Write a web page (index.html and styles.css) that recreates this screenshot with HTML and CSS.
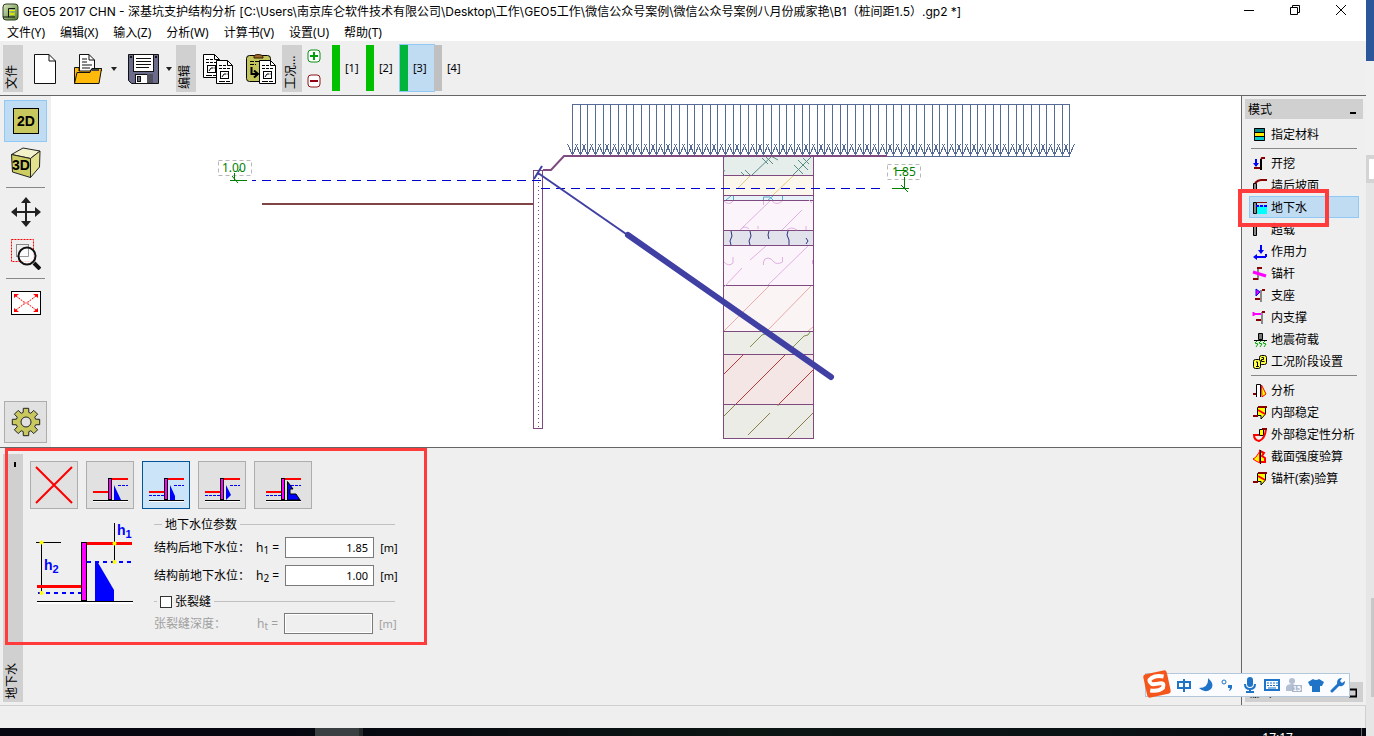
FILE: index.html
```html
<!DOCTYPE html>
<html lang="zh-CN">
<head>
<meta charset="utf-8">
<title>GEO5 2017 CHN - 深基坑支护结构分析</title>
<link rel="stylesheet" href="styles.css">
</head>
<body>
<div class="screen">
<div class="window">
  <header class="titlebar">
    <svg class="app-icon" width="18" height="18" viewBox="0 0 18 18"><defs><linearGradient id="ag" x1="0" y1="0" x2="1" y2="1"><stop offset="0" stop-color="#dce8c0"/><stop offset="1" stop-color="#4e7a2c"/></linearGradient></defs><rect x="1" y="1" width="15" height="16" rx="3" fill="url(#ag)" stroke="#2c3c20" stroke-width="1"/><path d="M1 14H6.500V5.500H13M6 14h7" stroke="#111" fill="none" stroke-width="1"/><path d="M7 7.500h6M7 10q4 1 6 0M7 12q3-1 6 0" stroke="#e6f000" stroke-width="1" fill="none"/></svg>
    <h1 class="title">GEO5 2017 CHN - 深基坑支护结构分析 [C:\Users\南京库仑软件技术有限公司\Desktop\工作\GEO5工作\微信公众号案例\微信公众号案例八月份戚家艳\B1（桩间距1.5）.gp2 *]</h1>
    <div class="controls">
      <button class="control" aria-label="最小化"><svg width="12" height="12" viewBox="0 0 12 12"><path d="M1 6.500H11" stroke="#000"/></svg></button>
      <button class="control" aria-label="还原"><svg width="12" height="12" viewBox="0 0 12 12"><path d="M1.500 3.500H8.500V10.500H1.500ZM3.500 3.500V1.500H10.500V8.500H8.500" stroke="#000" fill="none"/></svg></button>
      <button class="control" aria-label="关闭"><svg width="12" height="12" viewBox="0 0 12 12"><path d="M1 1L11 11M11 1L1 11" stroke="#000"/></svg></button>
    </div>
  </header>
  <nav class="menubar">
    <button>文件(Y)</button><button>编辑(X)</button><button>输入(Z)</button><button>分析(W)</button><button>计算书(V)</button><button>设置(U)</button><button>帮助(T)</button>
  </nav>

  <div class="toolbar">
    <div class="grip">文件</div>
    <div class="tool-group files">
      <button aria-label="新建"><svg width="24" height="32" viewBox="0 0 24 32"><path d="M1.500 1.500H16L22.500 8V30.500H1.500Z" fill="#fff" stroke="#111" stroke-width="1"/><path d="M16 1.500V8H22.500" fill="none" stroke="#111"/></svg></button>
      <button class="open" aria-label="打开"><svg width="30" height="32" viewBox="0 0 30 32"><path d="M6.500 20V1.500H16L21.500 7V18" fill="#fff" stroke="#111"/><path d="M16 1.500V7H21.500M9 6h5M9 9h5M9 12h10M9 15h8" fill="none" stroke="#111"/><path d="M1.500 30.500V14.500H6V18H17L19 15.500H28.500V18" fill="#ffb90a" stroke="#111"/><path d="M1.500 30.500L4 19.500H17L19 15.500H28.500L26 30.500Z" fill="#ffb90a" stroke="#111"/><path d="M19 17H26" stroke="#444" stroke-width="2"/></svg></button>
      <button class="caret" aria-label="打开选项"></button>
      <button aria-label="保存"><svg width="31" height="32" viewBox="0 0 31 32"><path d="M.5 1.500H30.500V30.500H3.500L.5 27.500Z" fill="#6b6b8c" stroke="#111"/><rect x="5.500" y="1.500" width="20" height="17" fill="#fff" stroke="#111"/><path d="M8 5.500h15M8 8.500h15M8 11.500h15M8 14.500h13" stroke="#111"/><rect x="7.500" y="21.500" width="17" height="9" fill="#fff" stroke="#111"/><rect x="19" y="21" width="6" height="9" fill="#50505f"/><rect x="9.500" y="23.500" width="3" height="5" fill="#6b6b8c" stroke="#111"/><path d="M2 4h2M27 4h2" stroke="#111" stroke-width="2"/></svg></button>
      <button class="caret" aria-label="保存选项"></button>
    </div>
    <div class="grip">编辑</div>
    <div class="tool-group clips">
      <button aria-label="复制"><svg width="31" height="32" viewBox="0 0 31 32"><g id="sheet" fill="none" stroke="#000"><path d="M.5 1.500H11.500L16.500 6.500V24.500H.5Z" fill="#fff"/><path d="M11.500 1.500V6.500H16.500"/><path d="M3 6.500h7M3 9.500h11" stroke-dasharray="3 1"/><rect x="4.500" y="12.500" width="8" height="7"/><path d="M6 18l2-3h5M3 22.500h11" stroke-dasharray="6 1"/></g><use href="#sheet" x="13" y="6"/></svg></button>
      <button aria-label="粘贴"><svg width="31" height="32" viewBox="0 0 31 32"><rect x=".5" y="2.500" width="24" height="26" rx="3" fill="#c4c45c" stroke="#000"/><path d="M8 3.500Q8 1.500 12 1.500T17 3.500V5H8Z" fill="#a0672c" stroke="#301c00"/><path d="M4 8.500h9M4 11.500h6" stroke="#000" stroke-dasharray="4 1"/><path d="M5.500 14V21H11M8 17.500L12 21L8 24.500" stroke="#000" fill="none" stroke-width="2"/><use href="#sheet" x="13" y="6"/></svg></button>
    </div>
    <div class="grip">工况…</div>
    <div class="stage-edit">
      <button aria-label="添加工况"><svg width="14" height="14" viewBox="0 0 14 14"><rect x="1" y="1" width="12" height="12" rx="3" fill="#fff" stroke="#0a8c12"/><path d="M3 7H11M7 3V11" stroke="#00a010" stroke-width="2"/></svg></button>
      <button aria-label="删除工况"><svg width="14" height="14" viewBox="0 0 14 14"><rect x="1" y="1" width="12" height="12" rx="3" fill="#fff" stroke="#8c1414"/><path d="M3 7H11" stroke="#900010" stroke-width="2"/></svg></button>
    </div>
    <div class="stages">
      <button class="stage">[1]</button><button class="stage">[2]</button><button class="stage current">[3]</button><button class="stage pending">[4]</button>
    </div>
  </div>

  <div class="body">
    <main class="main">
      <section class="workspace">
        <div class="view-tools">
          <button class="view-tool active" aria-label="2D"><svg width="26" height="26" viewBox="0 0 26 26"><rect x=".5" y=".5" width="25" height="25" fill="#c8c85f" stroke="#000"/><text x="13" y="18" text-anchor="middle" class="icon-text">2D</text></svg></button>
          <button class="view-tool" aria-label="3D"><svg width="30" height="32" viewBox="0 0 30 32"><g stroke="#222" stroke-linejoin="round"><path d="M.5 7.500L12 1L29 4L19.500 11.500Z" fill="#f3f3cb"/><path d="M.5 7.500L19.500 11.500V30.500L1.500 25Z" fill="#cccc62"/><path d="M19.500 11.500L29 4L28.500 20L19.500 30.500Z" fill="#e3e38f"/></g><text x="10" y="23" text-anchor="middle" class="icon-text">3D</text></svg></button>
          <hr>
          <button class="view-tool" aria-label="平移"><svg width="30" height="30" viewBox="0 0 30 30" fill="#222"><path d="M15 3V27M3 15H27" stroke="#222" stroke-width="2"/><path d="M15 0L20 6H10ZM15 30L10 24H20ZM0 15L6 10V20ZM30 15L24 20V10Z"/></svg></button>
          <button class="view-tool" aria-label="窗口缩放"><svg width="30" height="31" viewBox="0 0 30 31"><rect x=".5" y=".5" width="22" height="22" fill="none" stroke="#f00" stroke-dasharray="2 1"/><rect x="5.500" y="5.500" width="12" height="12" fill="none" stroke="#888"/><circle cx="16" cy="17" r="8.500" fill="#fff" fill-opacity=".8" stroke="#111" stroke-width="2"/><path d="M9 17.500h8.500V10" fill="none" stroke="#999"/><path d="M23 24L29 30" stroke="#111" stroke-width="4"/></svg></button>
          <hr>
          <button class="view-tool" aria-label="全部显示"><svg width="30" height="24" viewBox="0 0 30 24"><rect x=".5" y=".5" width="29" height="23" fill="#fff" stroke="#000"/><path d="M5 5L13 11M25 5L17 11M5 19L13 13M25 19L17 13" stroke="#f00" stroke-dasharray="2 1"/><path d="M3 3h5l-5 4zM27 3v4l-5-4zM3 21v-4l5 4zM27 21h-5l5-4z" fill="#f00"/><path d="M13 10v4M17 10v4M13 12h4" stroke="#f66"/></svg></button>
          <button class="view-tool settings" aria-label="设置"><svg width="30" height="30" viewBox="-15 -15 30 30"><g id="gear"></g></svg></button>
        </div>
        <div class="canvas">
          <svg width="1190" height="351" viewBox="51 96 1190 351">
            <g fill="none" stroke-width="1">
              <g id="loads" stroke="#556a94" shape-rendering="crispEdges"></g>
              <path d="M262 204H533" stroke="#7f4545" stroke-width="2"/>
              <g shape-rendering="crispEdges">
                <g id="soil"></g>
              </g>
              <g stroke="#5a8c86"><path d="M752 175L772 156M741 172l4 4M745 170l5 5M762 158l6 6M766 157l7 7M771 156l7 4M793 175L812 156M794 165l9 9M798 160l10 10M803 158l6 6M724 157l2-1M723 170l2 1"/></g>
              <path d="M738 188L750 176M773 195L793 176" stroke="#e6c880"/>
              <path d="M726 200L731 196M733.500 196V200M763.500 200V197H770L773 200M768 200L773 196M782.500 196V200" stroke="#5aa8cc"/>
              <g stroke="#e0b0e0"><path d="M740 230L770 201M782 230L802 210M724 201q5 5 9 0M763.500 201V205M772 201q5 5 10 0M812 203l-3-3M741 229q4-4 8 0M758 226v3M787 230q4-4 10 0M806 226v4M750 260L766 246M768 285L808 246M724 287L742 268M724 262q5 5 9 1v-6M763.500 265V262Q764 258 768 258Q771 258 774 262Q777 265 782.500 262V257M812.500 260v4"/></g>
              <g stroke="#303080"><path d="M731 231l1 5-2 5 1 4M750 231l1 5-2 5 1 4M769 231l-1 4 1 4M788 231l-1 4 2 5 0 5M806 238l2 3-2 3"/></g>
              <path d="M724 331L769 286M768 330L811 286M808 331L813 327" stroke="#e8aaaa"/>
              <path d="M750 347L762 335l3-1M793 347L804 336l4-1 2-3" stroke="#7f9050"/>
              <path d="M724 374L743 355M736 404L785 355M779 404L813 370" stroke="#b83c3c"/>
              <path d="M724 416L735 405M748 435L770 413M788 438L813 413M777 405h2" stroke="#8c7c4c"/>
              <path d="M543 170H551L564 156H887" stroke="#7f4a7f" stroke-width="2"/>
              <rect x="533.500" y="170.500" width="9" height="258" fill="#fff" stroke="#7f4a7f"/>
              <path d="M538.500 174V428" stroke="#7f4a7f" stroke-dasharray="1 3"/>
              <g stroke="#0000d0" stroke-dasharray="9 6"><path d="M252 180.500H256" stroke-dasharray="none"/><path d="M262 180.500H542"/><path d="M541 188.500H884"/></g>
              <g stroke="#4040a4"><path d="M534 179L542 166" stroke-width="2"/><path d="M538 173L629 236" stroke-width="2"/><path d="M628 235L831 377" stroke-width="6" stroke-linecap="round"/></g>
              <g stroke="#b8b8b8" stroke-dasharray="4 3"><rect x="218.500" y="160.500" width="33" height="15" fill="#fff"/><rect x="887.500" y="164.500" width="33" height="15" fill="#fff"/></g>
              <g stroke="#008000"><path d="M230 180.500H247M234.500 173V180M232 176L238 183M238 172l2-3M892 188.500H909M904.500 177V188M901 185L908 192M896 170.500h10"/></g>
            </g>
            <text class="level" x="222" y="172">1.00</text>
            <text class="level" x="892" y="176">1.85</text>
          </svg>
        </div>
      </section>

      <section class="dock">
        <div class="grip tall"><i class="pin"></i>地下水</div>
        <div class="dock-content">
          <div class="types">
            <button class="type" aria-label="无地下水"><svg width="46" height="46" viewBox="0 0 46 46"><path d="M5 5L41 41M41 5L5 41" stroke="#f00" stroke-width="2"/></svg></button>
            <button class="type" aria-label="类型1"><svg width="46" height="46" viewBox="0 0 46 46"><path d="M6 39.500H41" stroke="#fff"/><path d="M6 38.500H41" stroke="#000"/><path d="M6 30H21M25 17H41" stroke="#f00" stroke-width="2"/><path d="M31 23.500H41" stroke="#00f" stroke-dasharray="3 1"/><path d="M27 23L34 38H27Z" fill="#00f"/><rect x="21.500" y="16.500" width="3" height="21" fill="#f0f" stroke="#000"/></svg></button>
            <button class="type selected" aria-label="类型2"><svg width="46" height="46" viewBox="0 0 46 46"><path d="M6 39.500H41" stroke="#fff"/><path d="M6 38.500H41" stroke="#000"/><path d="M6 30H21M25 17H41" stroke="#f00" stroke-width="2"/><path d="M6 33.500H21M31 23.500H41" stroke="#00f" stroke-dasharray="3 1"/><path d="M27 23L32 34V38H27Z" fill="#00f"/><rect x="21.500" y="16.500" width="3" height="21" fill="#f0f" stroke="#000"/></svg></button>
            <button class="type" aria-label="类型3"><svg width="46" height="46" viewBox="0 0 46 46"><path d="M6 39.500H41" stroke="#fff"/><path d="M6 38.500H41" stroke="#000"/><path d="M6 30H21M25 17H41" stroke="#f00" stroke-width="2"/><path d="M6 33.500H21M31 23.500H41" stroke="#00f" stroke-dasharray="3 1"/><path d="M27 23L32 33L27 38Z" fill="#00f"/><rect x="21.500" y="16.500" width="3" height="21" fill="#f0f" stroke="#000"/></svg></button>
            <button class="type wide" aria-label="类型4"><svg width="46" height="46" viewBox="0 0 46 46"><path d="M6 39.500H41" stroke="#fff"/><path d="M6 38.500H41" stroke="#000"/><path d="M6 30H21M25 17H41" stroke="#f00" stroke-width="2"/><path d="M6 33.500H21M31 23.500H41" stroke="#00f" stroke-dasharray="3 1"/><path d="M27.500 19.500L33 27H30V32H36L40 38H27.500Z" fill="#00f" stroke="#000"/><rect x="21.500" y="16.500" width="3" height="21" fill="#f0f" stroke="#000"/></svg></button>
          </div>
          <div class="params">
            <svg class="scheme" width="100" height="88" viewBox="36 520 100 88">
              <path d="M37 603H133" stroke="#fff" stroke-width="2"/><path d="M36 542.500H61M41.500 542V594M114.500 523V561M37 601.500H133" stroke="#000"/>
              <path d="M37 586.500H81M87 543.500H132" stroke="#f00" stroke-width="3"/>
              <path d="M38 593H81M87 562H132" stroke="#00f" stroke-width="2" stroke-dasharray="4 4"/>
              <path d="M95 561H97L114 590V601H95Z" fill="#00f"/>
              <rect x="81.500" y="542.500" width="5" height="58" fill="#f0f" stroke="#000"/>
              <g fill="#ff0"><circle cx="41.500" cy="542.500" r="2"/><circle cx="41.500" cy="593" r="2"/><circle cx="114.500" cy="543.500" r="2"/><circle cx="114.500" cy="562" r="2"/></g>
              <text x="44" y="570" class="scheme-text">h<tspan dy="3" class="scheme-sub">2</tspan></text>
              <text x="117" y="535" class="scheme-text">h<tspan dy="3" class="scheme-sub">1</tspan></text>
            </svg>
            <form class="form">
              <div class="group-head"><span>地下水位参数</span></div>
              <div class="field"><label for="h1">结构后地下水位：</label><label for="h1" class="symbol">h<sub>1</sub> =</label><input id="h1" value="1.85"><span class="unit">[m]</span></div>
              <div class="field"><label for="h2">结构前地下水位：</label><label for="h2" class="symbol">h<sub>2</sub> =</label><input id="h2" value="1.00"><span class="unit">[m]</span></div>
              <div class="group-head check"><input type="checkbox" id="crack"><label for="crack">张裂缝</label></div>
              <div class="field disabled"><label for="ht">张裂缝深度：</label><label for="ht" class="symbol">h<sub>t</sub> =</label><input id="ht" disabled><span class="unit">[m]</span></div>
            </form>
          </div>
        </div>
        <div class="outline dock-outline"></div>
      </section>
    </main>

    <aside class="modes">
      <div class="modes-head"><span>模式</span><svg width="8" height="8" viewBox="0 0 8 8"><path d="M1 7H7" stroke="#000" stroke-width="2"/></svg></div>
      <ul class="mode-list">
        <li><a href="#"><svg viewBox="0 0 16 16"><path d="M2 1h11v5H2z" fill="#088"/><path d="M2 6h11v4H2z" fill="#fe0"/><path d="M2 10h11v4H2z" fill="#0cc"/><path d="M2.500 1.500h10v12h-10zM2 5.500h11M2 9.500h11" fill="none" stroke="#000"/></svg>指定材料</a></li>
        <li class="divider"></li>
        <li><a href="#"><svg viewBox="0 0 16 16"><path d="M4 3V10" stroke="#00f" stroke-width="2"/><path d="M1 7H7L4 11Z" fill="#00f"/><path d="M2 12H9" stroke="#800" stroke-width="2"/><path d="M9 14V3" stroke="#000" stroke-width="2"/><path d="M9 3L10 2H13" stroke="#800" stroke-width="2" fill="none"/></svg>开挖</a></li>
        <li><a href="#"><svg viewBox="0 0 16 16"><path d="M1.500 5.500h3v9h-3z" fill="#888" stroke="#000"/><path d="M3 5Q6 2 9 2H15" fill="none" stroke="#800" stroke-width="2"/></svg>墙后坡面</a></li>
        <li class="chosen"><a href="#"><svg viewBox="0 0 16 16"><path d="M5 6h10v8H5z" fill="#0ff"/><path d="M1.500 2.500h3v11h-3z" fill="#888" stroke="#000"/><path d="M5 2.500H15" stroke="#800"/><path d="M4 6H15" stroke="#00f" stroke-width="2" stroke-dasharray="3 1"/></svg>地下水</a></li>
        <li><a href="#"><svg viewBox="0 0 16 16"><path d="M1.500 4.500h3v9h-3z" fill="#888" stroke="#000"/><path d="M3 4.500H14" stroke="#800"/><path d="M4 1.500H14M4 3h10" stroke="#00f" stroke-dasharray="2 1"/></svg>超载</a></li>
        <li><a href="#"><svg viewBox="0 0 16 16"><path d="M9 1V8M4 13H14M14 10V13" stroke="#00f" stroke-width="2" fill="none"/><path d="M6 6H12L9 10ZM1 13L5 10V16Z" fill="#00f"/></svg>作用力</a></li>
        <li><a href="#"><svg viewBox="0 0 16 16"><path d="M6 2V14" stroke="#888" stroke-width="2"/><path d="M5 2H10M1 13H6" stroke="#800" stroke-width="2"/><path d="M1 6L14 10" stroke="#f0f" stroke-width="3"/></svg>锚杆</a></li>
        <li><a href="#"><svg viewBox="0 0 16 16"><path d="M9 2V14" stroke="#888" stroke-width="2"/><path d="M10 2H13M3 11H8" stroke="#800" stroke-width="2"/><path d="M4 1L8 4L4 8Z" fill="#f0f" stroke="#00f"/></svg>支座</a></li>
        <li><a href="#"><svg viewBox="0 0 16 16"><path d="M10 2V14" stroke="#888" stroke-width="2"/><path d="M10 2H13M4 10H9" stroke="#800" stroke-width="2"/><path d="M1 4H9M1.500 2V6" stroke="#f0f" stroke-width="2"/></svg>内支撑</a></li>
        <li><a href="#"><svg viewBox="0 0 16 16"><path d="M6.500 1.500h4v6h-4z" fill="#777" stroke="#000"/><path d="M2 8.500H15" stroke="#000"/><path d="M5 9L3 11L6 12L4 15M9 9L7 11L10 12L8 15M13 9L11 11L14 12L12 15" fill="none" stroke="#0a0" stroke-width="1"/></svg>地震荷载</a></li>
        <li><a href="#"><svg viewBox="0 0 16 16"><rect x="7.500" y="1.500" width="7" height="9" rx="2" fill="#ff4" stroke="#000"/><rect x="1.500" y="5.500" width="7" height="9" rx="2" fill="#ff4" stroke="#000"/><path d="M9.500 3.500h2v2h-2v2h3M4 8h1.500v4M4 12.500h3" stroke="#000" fill="none"/></svg>工况阶段设置</a></li>
        <li class="divider"></li>
        <li><a href="#"><svg viewBox="0 0 16 16"><path d="M4.500 14V1.500H8.500V14" fill="#fff" stroke="#000"/><path d="M9.500 2L14 11L10 14Z" fill="#ff0" stroke="#f00"/><path d="M1 11H4" stroke="#800" stroke-width="2"/></svg>分析</a></li>
        <li><a href="#"><svg viewBox="0 0 16 16"><path d="M5.500 2.500H13.500V9L9 14V10.500H5.500Z" fill="#ff0" stroke="#000"/><path d="M6 2H15M1 11H6" stroke="#800" stroke-width="2"/><path d="M6 5L13 9" stroke="#f00" stroke-width="2"/></svg>内部稳定</a></li>
        <li><a href="#"><svg viewBox="0 0 16 16"><path d="M7.500 2.500h4v6h-4z" fill="#ff0" stroke="#000"/><path d="M14 2Q13 12 7 14Q2 13 2 8H7" fill="none" stroke="#f00" stroke-width="2"/><path d="M10 2h5" stroke="#800" stroke-width="2"/></svg>外部稳定性分析</a></li>
        <li><a href="#"><svg viewBox="0 0 16 16"><path d="M8 2L6 5Q4 9 1 10L4 12L8 14Z" fill="#ff0" stroke="#f00"/><path d="M8 2L12 4L10 7L13 9V13H8Z" fill="#ff0" stroke="#f00" stroke-width="2"/><path d="M8.500 1V15" stroke="#000"/></svg>截面强度验算</a></li>
        <li><a href="#"><svg viewBox="0 0 16 16"><path d="M5.500 2.500H13.500V9L9 14V10.500H5.500Z" fill="#ff0" stroke="#000"/><path d="M6 2H15M1 11H6" stroke="#800" stroke-width="2"/><path d="M6 5L13 9" stroke="#f00" stroke-width="2"/></svg>锚杆(索)验算</a></li>
      </ul>
      <div class="modes-head output"><span>输出</span><svg width="8" height="10" viewBox="0 0 8 10"><path d="M0 1.500H7.500V8.500H0" fill="none" stroke="#000" stroke-width="2"/></svg></div>
      <div class="outline mode-outline"></div>
    </aside>
  </div>
  <footer class="statusbar"></footer>
  <div class="taskbar"><i class="task"></i><time>17:17</time><i class="peek"></i></div>

  <div class="ime">
    <svg class="ime-logo" width="30" height="30" viewBox="0 0 30 30"><g transform="rotate(-12 15 15)"><rect x="3" y="3" width="24" height="24" rx="3" fill="#f4561c"/><path d="M23 9Q16 6 11 8T10 14Q13 15 18 15T20 20Q15 23 7 20" fill="none" stroke="#fff" stroke-width="4"/></g></svg>
    <svg viewBox="0 0 16 16"><path d="M2 5H14V11H2ZM8 2V15" fill="none" stroke="#1f74c8" stroke-width="2"/></svg>
    <svg viewBox="0 0 16 16"><path d="M10 1Q17 7 13 12Q7 17 1 11Q11 11 10 1Z" fill="#1f74c8"/></svg>
    <svg viewBox="0 0 16 16"><circle cx="4" cy="5" r="2" fill="none" stroke="#1f74c8"/><path d="M8 8h4v3q-1 3-3 3l1-3H8z" fill="#1f74c8"/></svg>
    <svg viewBox="0 0 16 16"><rect x="5" y="0" width="6" height="10" rx="3" fill="#1f74c8"/><path d="M3 7Q3 12 8 12T13 7M8 12V15M4 15H12" fill="none" stroke="#1f74c8" stroke-width="2"/></svg>
    <svg viewBox="0 0 16 16"><rect x="1" y="3" width="14" height="10" fill="none" stroke="#1f74c8" stroke-width="2"/><path d="M3 6H14M3 8.500H14" stroke="#1f74c8" stroke-dasharray="2 1" stroke-width="1"/><path d="M4 11H12" stroke="#1f74c8"/></svg>
    <svg viewBox="0 0 16 16"><circle cx="6" cy="4" r="3" fill="#b4bfd4"/><path d="M0 14V10Q1 7 6 7T10 14Z" fill="#b4bfd4"/><rect x="6" y="8" width="10" height="7" fill="#aab6cc"/><text x="7" y="14" class="ime-badge">15</text></svg>
    <svg viewBox="0 0 16 16"><path d="M5 2Q8 4 11 2L16 5L14 9H12V15H4V9H2L0 5Z" fill="#1f74c8"/></svg>
    <svg viewBox="0 0 16 16"><path d="M2 14L9 7" stroke="#1f74c8" stroke-width="3" stroke-linecap="round"/><path d="M12 1Q7 1 7 6Q8 10 12 9Q15 8 15 4L12 6L10 4Z" fill="#1f74c8"/></svg>
  </div>
</div>
<div class="backdrop"><i class="blue"></i><i class="pale"></i><i class="notch"></i><i class="rest"></i></div>
</div>
<script src="drawing.js"></script>
</body>
</html>
```

FILE: styles.css
```css
* { box-sizing: border-box; }
body { margin: 0; font: 12px/16px "Noto Sans", "Noto Sans CJK SC", sans-serif; color: #000; background: #efefef; }
button { font: inherit; color: inherit; padding: 0; border: 0; background: none; }
svg { display: block; flex: none; }
.screen { display: flex; height: 100vh; overflow: hidden; }
.window { position: relative; flex: 1; min-width: 0; display: flex; flex-direction: column; }
.titlebar { display: flex; align-items: center; height: 24px; background: #fff; }
.app-icon { margin: 0 3px 0 2px; }
.title { flex: 1; min-width: 0; margin: 0; font: 12px/16px Inter, "Noto Sans CJK SC", sans-serif; white-space: nowrap; overflow: hidden; }
.controls { display: flex; align-self: flex-start; margin-right: 2px; }
.control { width: 46px; height: 20px; display: grid; place-items: center; }
.menubar { display: flex; gap: 15px; height: 17px; padding-left: 7px; background: #fff; }

.toolbar { display: flex; align-items: flex-start; height: 55px; padding: 4px 3px; border-bottom: 1px solid #666; }
.grip { writing-mode: vertical-rl; text-orientation: sideways; transform: rotate(180deg); width: 20px; height: 47px; background: #d0d0d0; line-height: 18px; padding-top: 3px; white-space: nowrap; overflow: hidden; }
.tool-group { display: flex; align-items: center; height: 47px; }
.files { padding: 0 4px 0 10px; }
.open { margin: 0 8px 0 16px; }
.caret { border: solid transparent; border-width: 4px 3px 0; border-top-color: #222; margin-right: 11px; }
.files .caret:last-child { margin: 0 0 0 7px; }
.clips { gap: 12px; padding: 0 5px 0 7px; }
.stage-edit { display: flex; flex-direction: column; gap: 11px; padding: 4px 0 0 5px; }
.stages { display: flex; margin-left: 11px; }
.stage { width: 34px; height: 46px; border-left: 8px solid #00c000; font-size: 11px; text-align: left; padding-left: 5px; }
.stage.current { background: #c0dcf3; border-left-color: #00b43c; outline: 1px solid #90c8f6; }
.stage.pending { border-left-color: #c0c0c0; }

.body { flex: 1; min-height: 0; display: flex; }
.main { flex: 1; min-width: 0; display: flex; flex-direction: column; }
.workspace { flex: 1; display: flex; min-height: 0; }
.view-tools { flex: none; width: 51px; display: flex; flex-direction: column; padding: 4px; }
.view-tools hr { width: 39px; height: 1px; margin: 3px 2px; border: 0; background: #888; }
.view-tool { width: 43px; height: 42px; display: grid; place-items: center; border: 1px solid transparent; }
.view-tool.active { background: #c0dcf3; border-color: #90c8f6; }
.view-tool.settings { margin-top: auto; background: #e1e1e1; border-color: #adadad; }
.icon-text { font: bold 14px "Liberation Sans", sans-serif; }
.canvas { flex: 1; min-width: 0; overflow: hidden; background: #fff; }
.level { font-size: 12px; fill: #008000; }

.dock { position: relative; flex: none; min-height: 258px; display: flex; border-top: 1px solid #666; padding: 6px 3px 3px; }
.grip.tall { height: auto; }
.pin { position: absolute; left: 7px; bottom: 8px; width: 2px; height: 5px; background: #000; }
.dock-content { padding: 7px; }
.types { display: flex; gap: 8px; }
.type { width: 48px; height: 48px; display: grid; place-items: center; background: #e1e1e1; border: 1px solid #adadad; }
.type.wide { width: 58px; }
.type.selected { background: #cce4f7; border-color: #005499; }
.params { display: flex; gap: 18px; padding: 7px 0 0 6px; }
.scheme { margin-top: 4px; }
.scheme-text { font: bold 14px "Liberation Sans", sans-serif; fill: #00f; }
.scheme-sub { font-size: 11px; }
.form { width: 241px; }
.group-head { display: flex; align-items: center; height: 17px; margin-bottom: 4px; gap: 3px; }
.group-head::before { content: ""; width: 8px; height: 1px; background: #c0c0c0; }
.group-head::after { content: ""; flex: 1; height: 1px; background: #c0c0c0; }
.group-head.check { margin: 7px 0 3px; }
.check::before { width: 3px; }
.check input { appearance: none; width: 12px; height: 12px; margin: 0; border: 1px solid #333; background: #fff; }
.field { display: grid; grid-template-columns: 1fr auto 89px 16px; align-items: center; column-gap: 6px; height: 21px; margin-bottom: 7px; white-space: nowrap; }
.field sub { font-size: 10px; line-height: 1px; vertical-align: -2px; }
.field input { width: 100%; height: 21px; border: 1px solid #7a7a7a; background: #fff; text-align: right; padding: 0 5px; font: 11px "Noto Sans", sans-serif; }
.field .unit { font-size: 11px; }
.field.disabled { color: #a0a0a0; }
.field.disabled input { background: #efefef; box-shadow: inset 0 0 0 1px #fff; }
.outline { position: absolute; border: 3px solid #ff3b3b; pointer-events: none; }
.dock-outline { left: 5px; top: 0; width: 422px; height: 197px; }

.modes { position: relative; flex: none; width: 125px; display: flex; flex-direction: column; border-left: 1px solid #666; padding: 3px; }
.modes-head { display: flex; align-items: center; justify-content: space-between; height: 20px; padding: 1px 6px 0 3px; background: #d0d0d0; }
.output { margin-top: auto; }
.mode-list { list-style: none; margin: 4px 4px 0; padding: 0; }
.mode-list li { height: 22px; }
.mode-list .divider { height: 1px; margin: 3px 2px; background: #888; }
.mode-list a { display: flex; align-items: center; gap: 3px; height: 22px; padding: 1px 0 0 2px; border: 1px solid transparent; color: #000; text-decoration: none; white-space: nowrap; }
.mode-list svg { width: 16px; height: 16px; }
.mode-list .chosen a { background: #c0dcf3; border-color: #90c8f6; }
.mode-outline { left: -4px; top: 93px; width: 91px; height: 38px; border-width: 4px; }

.statusbar { height: 23px; border: solid #d0d0d0; border-width: 1px 1px 0 0; }
.taskbar { display: flex; justify-content: flex-end; height: 8px; overflow: hidden; color: #fff; background: linear-gradient(90deg, #05060f 0, #05060f 20%, #0b1512 55%, #0a1214 80%, #05060f); }
.task { width: 48px; height: 8px; margin-left: 315px; margin-right: auto; background: #3a3f42; border-right: 4px solid #24292b; }
.taskbar time { padding-top: 2px; }
.peek { width: 1px; margin: 0 4px 0 68px; background: #666; }
.ime { position: absolute; right: 16px; bottom: 39px; height: 24px; display: flex; align-items: center; gap: 6px; padding: 0 4px 0 30px; background: #fafcff; border: 1px solid #b4c8dc; width: 205px; }
.ime svg { width: 16px; height: 16px; }
.ime .ime-logo { position: absolute; left: -4px; top: -5px; width: 30px; height: 30px; }
.ime-badge { font: bold 7px "Liberation Sans", sans-serif; fill: #fff; }

.backdrop { flex: none; width: 8px; display: flex; flex-direction: column; }
.blue { height: 61px; background: #2b579a; }
.pale { height: 94px; background: #f0f0f0; }
.notch { height: 28px; background: #fff; border: solid #d4d4d4; border-width: 4px 0 4px 3px; }
.rest { flex: 1; background: linear-gradient(#c8c8c8, #c8c8c8) 5px 415px / 3px 99px no-repeat, #e6e6e6; }
```

FILE: drawing.js
```js
const NS = "http://www.w3.org/2000/svg";
function add(parent, tag, attrs) {
  const el = document.createElementNS(NS, tag);
  for (const key in attrs) el.setAttribute(key, attrs[key]);
  parent.appendChild(el);
}

// Surcharge: evenly spaced arrows between the two horizontal lines.
const loads = document.getElementById("loads");
let d = "M572 104.5H1070M572 156.5H1070";
for (let i = 0; i <= 65; i++) {
  const x = Math.round(572 + i * 7.65) + 0.5;
  d += `M${x} 104V156M${x - 5} 144L${x} 155L${x + 5} 144`;
}
add(loads, "path", { d });

// Soil profile: bottom depth of each layer and its fill.
const soil = document.getElementById("soil");
const layers = [[175, "#e6eeec"], [195, "#fbf7ec"], [200, "#e6f2f8"], [230, "#fbf5fb"], [245, "#e2e2ec"],
  [285, "#fbf5fb"], [331, "#faf4f4"], [354, "#ecede6"], [404, "#f3e6e4"], [438, "#ecece6"]];
let depth = 156;
for (const [bottom, fill] of layers) {
  add(soil, "rect", { x: 723.5, y: depth + 0.5, width: 90, height: bottom - depth, fill, stroke: "#7f4a7f" });
  depth = bottom;
}

// Settings gear.
const gear = document.getElementById("gear");
let g = "";
for (let i = 0; i < 8; i++) {
  for (const [a, r] of [[-16, 10], [-11, 14], [11, 14], [16, 10]]) {
    const t = (i * 45 + a) * Math.PI / 180;
    g += (g ? "L" : "M") + (r * Math.sin(t)).toFixed(1) + " " + (-r * Math.cos(t)).toFixed(1);
  }
}
add(gear, "path", { d: g + "Z", fill: "#c8c85f", stroke: "#222", "stroke-linejoin": "round" });
add(gear, "circle", { r: 5, fill: "#e1e1e1", stroke: "#222" });
```
